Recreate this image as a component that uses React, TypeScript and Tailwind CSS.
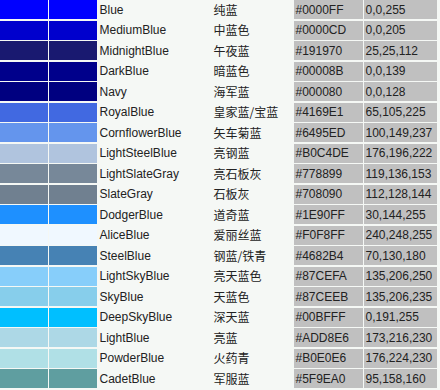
const COLORS = [
  { name: "Blue", zh: "纯蓝", hex: "#0000FF", rgb: "0,0,255" },
  { name: "MediumBlue", zh: "中蓝色", hex: "#0000CD", rgb: "0,0,205" },
  { name: "MidnightBlue", zh: "午夜蓝", hex: "#191970", rgb: "25,25,112" },
  { name: "DarkBlue", zh: "暗蓝色", hex: "#00008B", rgb: "0,0,139" },
  { name: "Navy", zh: "海军蓝", hex: "#000080", rgb: "0,0,128" },
  { name: "RoyalBlue", zh: "皇家蓝/宝蓝", hex: "#4169E1", rgb: "65,105,225" },
  { name: "CornflowerBlue", zh: "矢车菊蓝", hex: "#6495ED", rgb: "100,149,237" },
  { name: "LightSteelBlue", zh: "亮钢蓝", hex: "#B0C4DE", rgb: "176,196,222" },
  { name: "LightSlateGray", zh: "亮石板灰", hex: "#778899", rgb: "119,136,153" },
  { name: "SlateGray", zh: "石板灰", hex: "#708090", rgb: "112,128,144" },
  { name: "DodgerBlue", zh: "道奇蓝", hex: "#1E90FF", rgb: "30,144,255" },
  { name: "AliceBlue", zh: "爱丽丝蓝", hex: "#F0F8FF", rgb: "240,248,255" },
  { name: "SteelBlue", zh: "钢蓝/铁青", hex: "#4682B4", rgb: "70,130,180" },
  { name: "LightSkyBlue", zh: "亮天蓝色", hex: "#87CEFA", rgb: "135,206,250" },
  { name: "SkyBlue", zh: "天蓝色", hex: "#87CEEB", rgb: "135,206,235" },
  { name: "DeepSkyBlue", zh: "深天蓝", hex: "#00BFFF", rgb: "0,191,255" },
  { name: "LightBlue", zh: "亮蓝", hex: "#ADD8E6", rgb: "173,216,230" },
  { name: "PowderBlue", zh: "火药青", hex: "#B0E0E6", rgb: "176,224,230" },
  { name: "CadetBlue", zh: "军服蓝", hex: "#5F9EA0", rgb: "95,158,160" },
];

export default function App() {
  return (
    <div className="w-[440px] h-[390px] overflow-hidden bg-[#f5f8f5] text-[12px] text-[#222] font-['Liberation_Sans','Noto_Sans_CJK_SC',sans-serif]">
      <div className="grid grid-cols-[47.5px_47.5px_114px_79px_68.5px_73px] auto-rows-[19px] gap-x-[1.5px] gap-y-[1.5px]">
        {COLORS.map((c) => (
          <div key={c.name} className="contents">
            {/* two swatch cells */}
            <div style={{ backgroundColor: c.hex }} />
            <div style={{ backgroundColor: c.hex }} />
            <div className="flex items-center pl-[1.5px]">{c.name}</div>
            <div className="flex items-center font-['Noto_Sans_CJK_SC',sans-serif]">{c.zh}</div>
            <div className="flex items-center pl-[1.5px] bg-[#c0c0c0]">{c.hex}</div>
            <div className="flex items-center pl-[1.5px] bg-[#c0c0c0]">{c.rgb}</div>
          </div>
        ))}
      </div>
    </div>
  );
}
